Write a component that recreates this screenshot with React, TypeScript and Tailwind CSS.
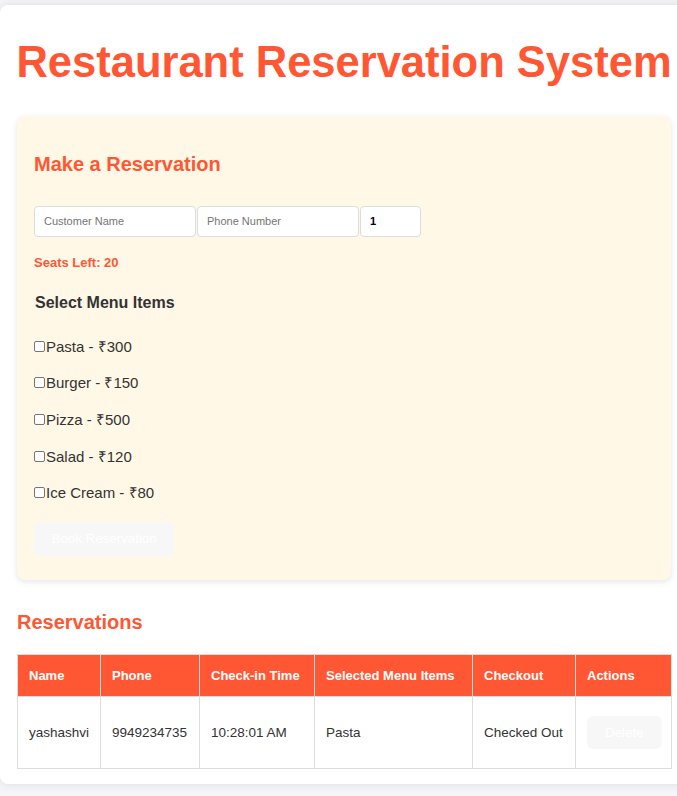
import { useState } from "react";

const menuItems = [
  { name: "Pasta", price: 300 },
  { name: "Burger", price: 150 },
  { name: "Pizza", price: 500 },
  { name: "Salad", price: 120 },
  { name: "Ice Cream", price: 80 },
];

const reservations = [
  {
    name: "yashashvi",
    phone: "9949234735",
    checkIn: "10:28:01 AM",
    items: "Pasta",
    status: "Checked Out",
  },
];

const headers = [
  { label: "Name", width: "w-[83px]" },
  { label: "Phone", width: "w-[99px]" },
  { label: "Check-in Time", width: "w-[115px]" },
  { label: "Selected Menu Items", width: "w-[158px]" },
  { label: "Checkout", width: "w-[103px]" },
  { label: "Actions", width: "w-[96px]" },
];

export default function App() {
  const [seats] = useState("1");
  const [selected, setSelected] = useState<string[]>([]);

  function toggle(name: string) {
    setSelected((prev) =>
      prev.includes(name) ? prev.filter((n) => n !== name) : [...prev, name]
    );
  }

  return (
    <div className="min-h-screen overflow-hidden bg-[#f4f4f9] pt-[5px] font-['Liberation_Sans',Arial,sans-serif] text-[#333]">
      <div className="w-[688px] rounded-lg bg-white px-[17px] pt-[32px] pb-[15px] shadow-[0_0_10px_rgba(0,0,0,0.1)]">
        <h1 className="-mx-[17px] text-center text-[43.5px] leading-[50.6px] font-bold whitespace-nowrap text-[#ff5733]">
          Restaurant Reservation System
        </h1>

        {/* booking form */}
        <div className="mt-[28px] rounded-lg bg-[#fff8e6] px-[17px] pt-[37px] pb-[24px] shadow-[0_2px_6px_rgba(0,0,0,0.1)]">
          <h2 className="text-[20px] leading-[23px] font-bold text-[#ff5733]">
            Make a Reservation
          </h2>

          <div className="mt-[30px] flex gap-px">
            <input
              type="text"
              placeholder="Customer Name"
              className="h-[31px] w-[162px] rounded border border-[#ddd] bg-white px-[9px] text-[11px] text-black outline-none placeholder:text-[#757575]"
            />
            <input
              type="text"
              placeholder="Phone Number"
              className="h-[31px] w-[162px] rounded border border-[#ddd] bg-white px-[9px] text-[11px] text-black outline-none placeholder:text-[#757575]"
            />
            <input
              type="number"
              defaultValue={seats}
              className="h-[31px] w-[61px] rounded border border-[#ddd] bg-white px-[9px] text-[11px] font-bold text-black outline-none"
            />
          </div>

          <p className="mt-[18px] text-[13px] leading-[15px] font-bold text-[#ff5733]">
            Seats Left: 20
          </p>

          <h3 className="mt-[24px] pl-px text-[16px] leading-[18px] font-bold text-[#333]">
            Select Menu Items
          </h3>

          <div className="mt-[26px] flex flex-col gap-[19.4px]">
            {menuItems.map((item) => (
              <label
                key={item.name}
                className="flex items-center text-[15px] leading-[17.25px] text-[#333]"
              >
                <input
                  type="checkbox"
                  checked={selected.includes(item.name)}
                  onChange={() => toggle(item.name)}
                  className="m-0 mr-px h-[11px] w-[11px] appearance-none rounded-[2px] border border-[#767676] bg-white checked:bg-[#ff5733]"
                />
                {item.name} - ₹{item.price}
              </label>
            ))}
          </div>

          <button
            type="button"
            className="mt-[21px] h-[34px] rounded-md bg-[#f7f7f7] px-[17.5px] text-[13.33px] text-white"
          >
            Book Reservation
          </button>
        </div>

        <h2 className="mt-[31px] text-[20px] leading-[23px] font-bold text-[#ff5733]">
          Reservations
        </h2>

        <table className="mt-[20px] w-[654px] table-fixed border-collapse text-left">
          <thead>
            <tr className="bg-[#ff5733]">
              {headers.map((h) => (
                <th
                  key={h.label}
                  className={`${h.width} h-[42px] border border-[#ddd] px-[11px] text-[13px] font-bold whitespace-nowrap text-white`}
                >
                  {h.label}
                </th>
              ))}
            </tr>
          </thead>
          <tbody>
            {reservations.map((r) => (
              <tr key={r.phone}>
                <td className="h-[72px] border border-[#ddd] px-[11px] text-[13.5px] text-[#333]">
                  {r.name}
                </td>
                <td className="border border-[#ddd] px-[11px] text-[13.5px] text-[#333]">
                  {r.phone}
                </td>
                <td className="border border-[#ddd] px-[11px] text-[13.5px] text-[#333]">
                  {r.checkIn}
                </td>
                <td className="border border-[#ddd] px-[11px] text-[13.5px] text-[#333]">
                  {r.items}
                </td>
                <td className="border border-[#ddd] px-[11px] text-[13.5px] whitespace-nowrap text-[#333]">
                  {r.status}
                </td>
                <td className="border border-[#ddd] px-[11px]">
                  <button
                    type="button"
                    className="h-[33px] rounded-md bg-[#f7f7f7] px-[18px] text-[13.33px] text-white"
                  >
                    Delete
                  </button>
                </td>
              </tr>
            ))}
          </tbody>
        </table>
      </div>
    </div>
  );
}
